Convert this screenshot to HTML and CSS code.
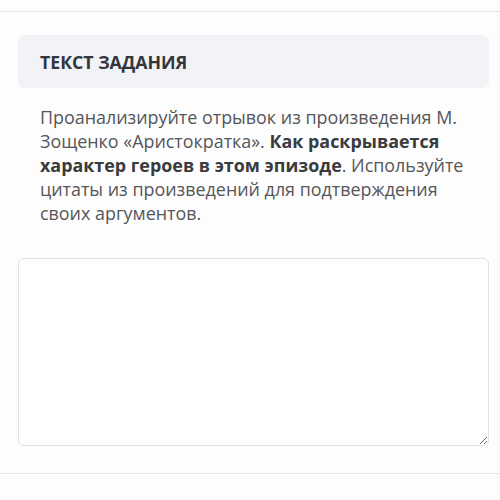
FILE: index.html
```html
<!DOCTYPE html>
<html lang="ru">
<head>
<meta charset="utf-8">
<link rel="stylesheet" href="styles.css">
</head>
<body>
<div class="page">
  <div class="task">
    <div class="task-head">ТЕКСТ ЗАДАНИЯ</div>
    <p class="task-text">Проанализируйте отрывок из произведения М. Зощенко «Аристократка». <b>Как раскрывается характер героев в этом эпизоде</b>. Используйте цитаты из произведений для подтверждения своих аргументов.</p>
    <textarea class="answer"></textarea>
  </div>
</div>
</body>
</html>
```
FILE: styles.css
```css
html, body {
  margin: 0;
  padding: 0;
  background: #fdfdfd;
}
body {
  font-family: "Open Sans", "Noto Sans", sans-serif;
}
.page {
  margin-top: 11px;
  border-top: 1px solid #e4e4e6;
  border-bottom: 1px solid #e4e4e6;
  padding: 23px 11px 27px 18px;
}
.task-head {
  background: #f2f3f6;
  border-radius: 6px;
  height: 53px;
  display: flex;
  align-items: center;
  padding-left: 22px;
  font-size: 17.7px;
  font-weight: 700;
  color: #33363b;
}
.task-text {
  margin: 17px 0 0;
  padding: 0 12px 0 22px;
  font-size: 17.9px;
  line-height: 24px;
  color: #555659;
}
.task-text b {
  color: #3a3b3e;
  font-weight: 700;
}
.answer {
  display: block;
  box-sizing: border-box;
  width: 100%;
  height: 188px;
  margin-top: 33px;
  border: 1px solid #e2e2e4;
  border-radius: 6px;
  background: #fff;
}
```
